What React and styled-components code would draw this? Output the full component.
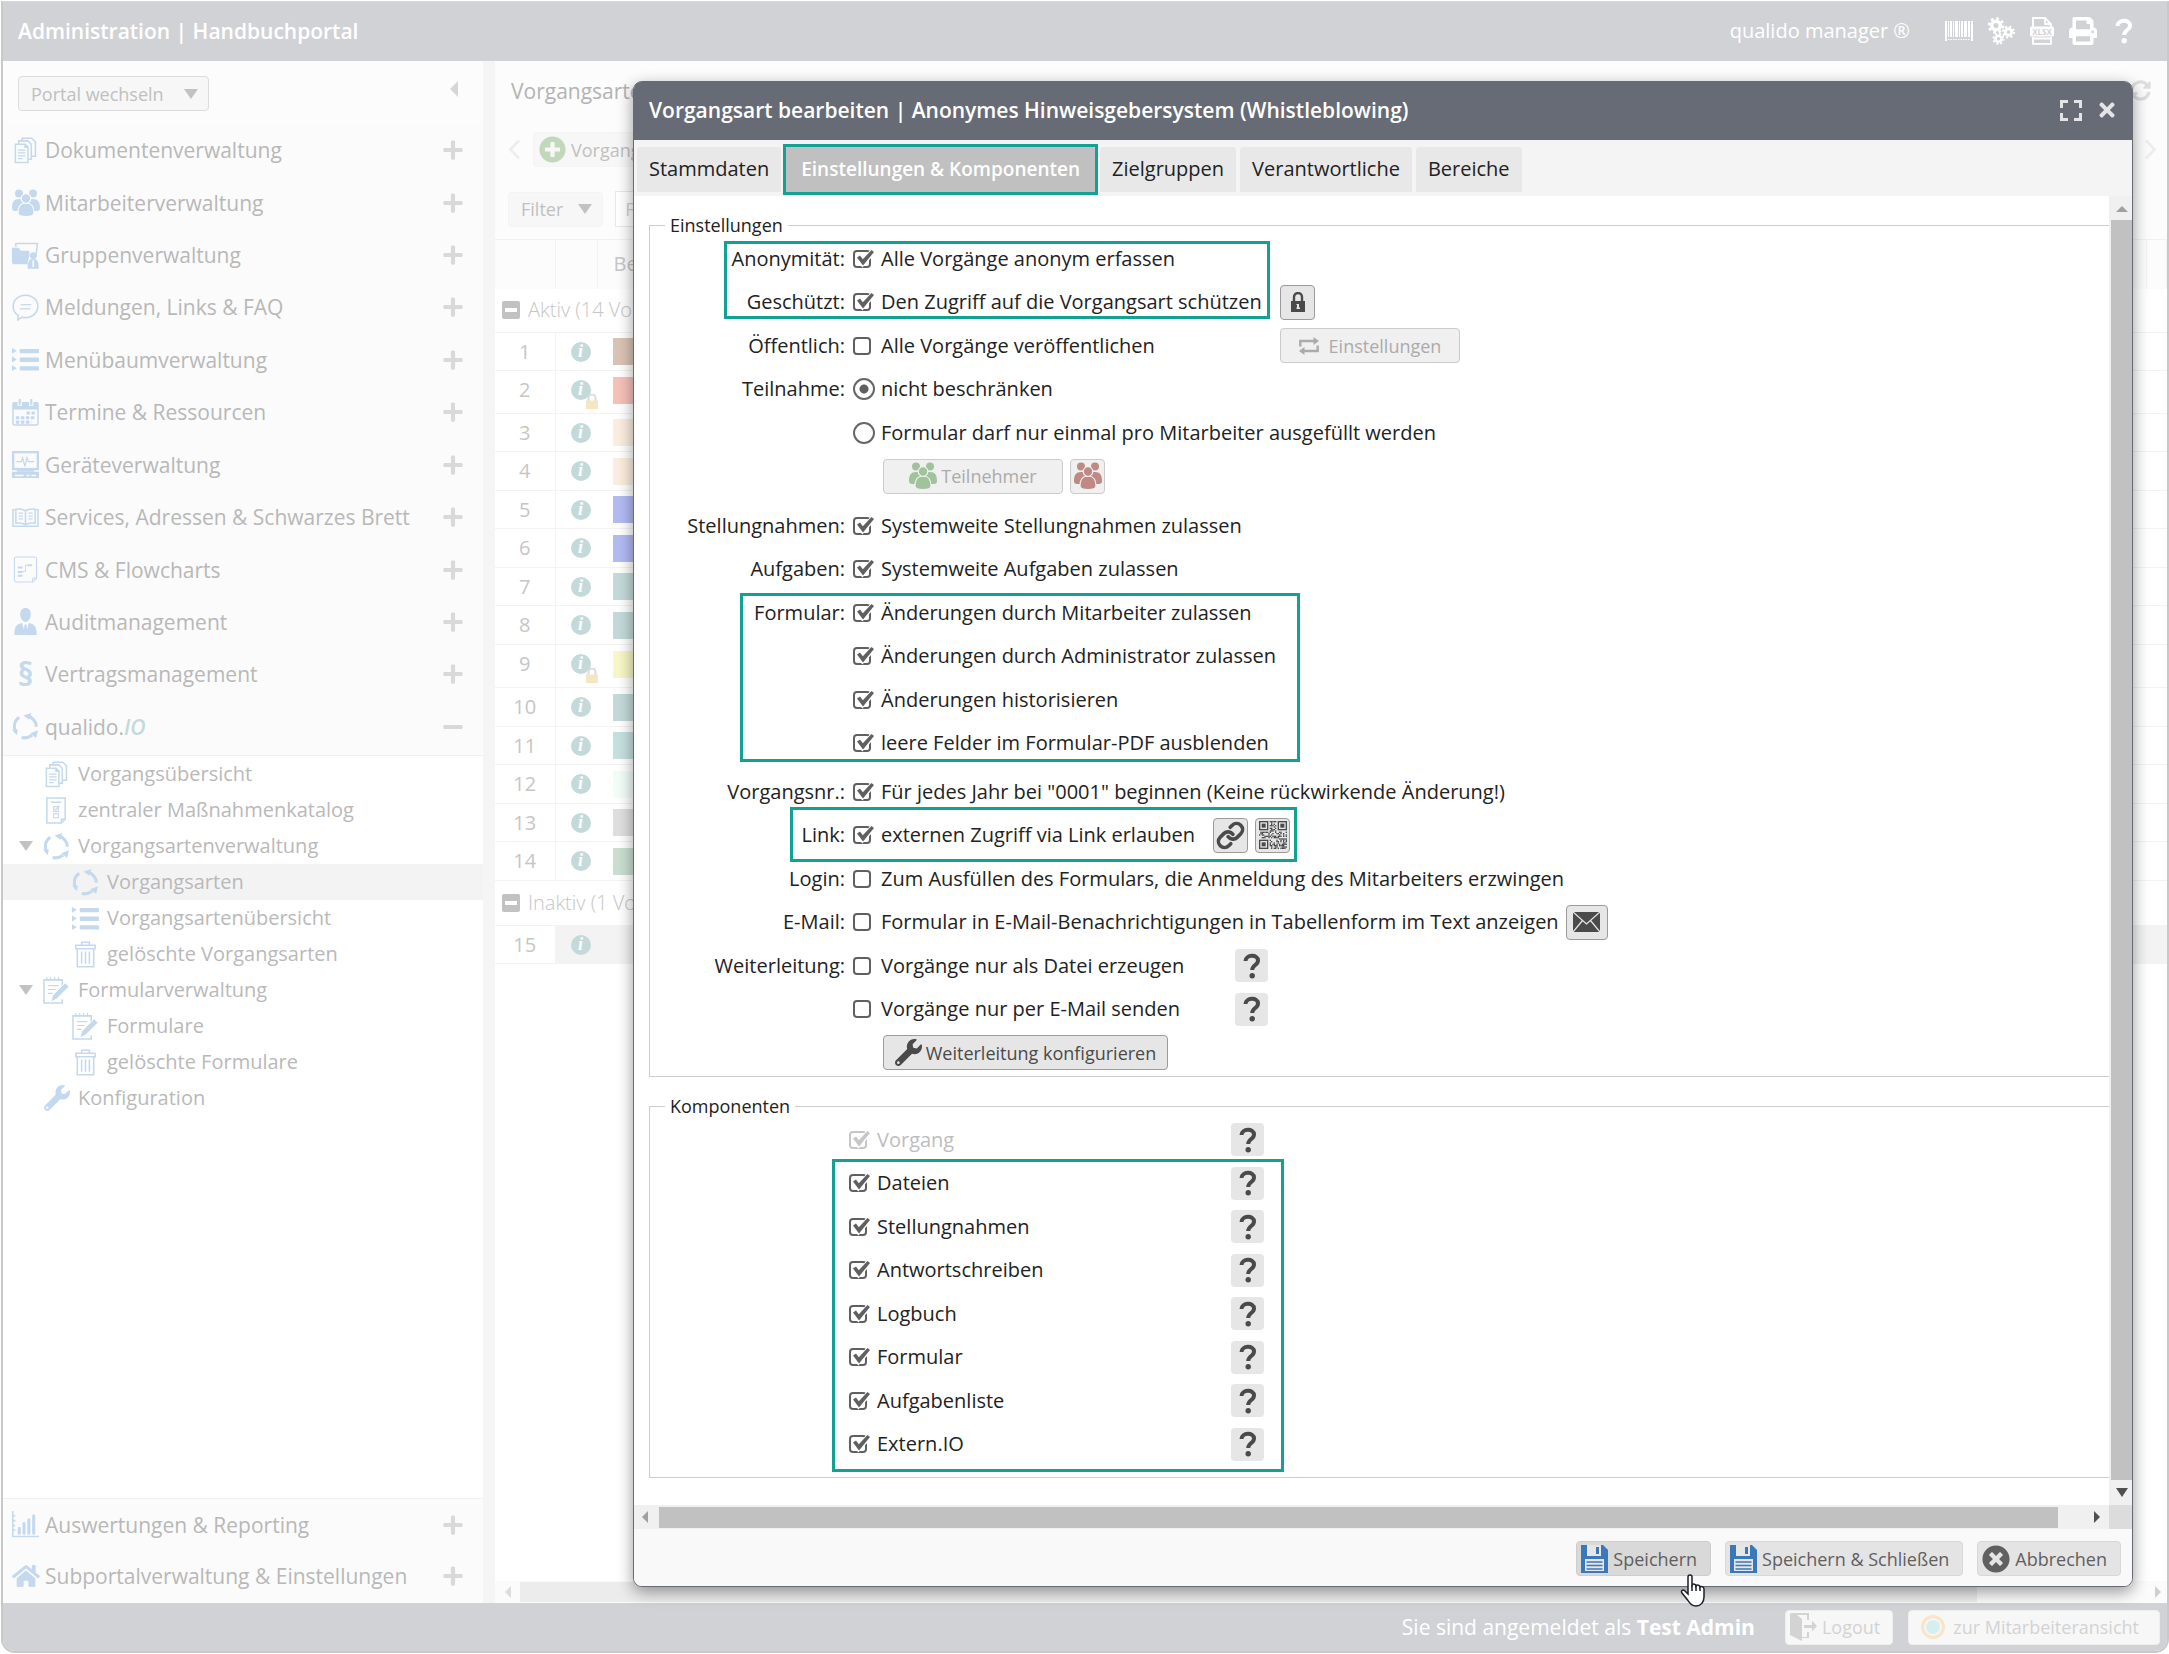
import React, { useState } from 'react'
import styled, { createGlobalStyle, css } from 'styled-components'
import {
  FaHome,
  FaMinus,
  FaPlus,
  FaPlusCircle,
  FaPrint,
  FaSyncAlt,
  FaTimes,
  FaTimesCircle,
  FaWrench
} from 'react-icons/fa'
import { Link as LinkIcon } from 'lucide-react'

const GlobalStyle = createGlobalStyle`
  * {
    box-sizing: border-box;
  }

  body {
    margin: 0;
    background: #fff;
    font-family: 'Open Sans', 'Noto Sans', sans-serif;
    font-size: 20px;
    line-height: 28px;
    color: #222;
  }

  button,
  input {
    font-family: inherit;
  }

  svg {
    flex: none;
    display: block;
  }
`

/* ---------- icons ---------- */

const Svg = ({ size = 27, box = 28, children, ...rest }) => (
  <svg
    width={size}
    height={size}
    viewBox={`0 0 ${box} ${box}`}
    fill="none"
    stroke="currentColor"
    strokeWidth="1.6"
    aria-hidden="true"
    {...rest}
  >
    {children}
  </svg>
)

const DocsIcon = () => (
  <Svg>
    <path d="M3.5 7.5h10l3 3v16h-13z M13.5 7.5v3h3" />
    <path d="M7 7V4h9.5L20 7.5V23h-3 M10.5 4V1.2h10L24.300 5V20h-3.8" />
    <path d="M6 13.5h8M6 16.5h8M6 19.5h8M6 22.5h5" strokeWidth="1.3" />
  </Svg>
)

const GroupIcon = ({ halo = '#fbfbfb' }) => (
  <Svg size={28} fill="currentColor" stroke="none">
    <circle cx="7" cy="4.5" r="4" />
    <circle cx="21" cy="4.5" r="4" />
    <path d="M0 19c0-6 2-9 7-9s6 2 6 6v6H3c-2 0-3-1-3-3zM28 19c0-6-2-9-7-9s-6 2-6 6v6h10c2 0 3-1 3-3z" />
    <g stroke={halo} strokeWidth="1.2">
      <path d="M6 24c0-6 2-10 8-10s8 4 8 10c0 2-2 3.500-8 3.500S6 26 6 24z" />
      <circle cx="14" cy="9.5" r="4.8" />
    </g>
  </Svg>
)

const FolderUserIcon = () => (
  <Svg>
    <path d="M4 5V1.500h22.500l-2 15" />
    <path d="M0 6h7l2 3h9v5l-2 9H1l-1-2z" fill="currentColor" stroke="none" />
    <circle cx="22" cy="14" r="3.5" fill="currentColor" stroke="none" />
    <path d="M17 27c0-6 2-9 5-9s5 3 5 9z" fill="currentColor" />
    <path d="M22 19v7" stroke="#fbfbfb" />
  </Svg>
)

const BubbleIcon = () => (
  <Svg>
    <path d="M14 1.200c7.200 0 12.800 5.100 12.800 11.600S21.200 24.500 14 24.500c-1.500 0-2.800-.2-4-.5L6 27l.5-4.700C3 20.300 1.200 16.800 1.200 12.800 1.200 6.300 6.800 1.200 14 1.200z" />
    <path d="M9 11h11M8 15.500h11" strokeWidth="1.3" />
  </Svg>
)

const ListIcon = () => (
  <Svg fill="currentColor" stroke="none">
    <path d="M0 2l5 3-5 3zM0 11l5 3-5 3zM0 20l5 3-5 3z" />
    <rect x="8" y="3" width="20" height="4.5" rx="1" />
    <rect x="8" y="12" width="20" height="4.5" rx="1" />
    <rect x="8" y="21" width="20" height="4.5" rx="1" />
  </Svg>
)

const CalendarIcon = () => (
  <Svg>
    <rect x="1" y="4" width="26" height="23" rx="1.5" />
    <path d="M1 3.500h26V11H1z" fill="currentColor" stroke="none" />
    <path d="M8 0v7M20 0v7" stroke="#fbfbfb" strokeWidth="4.5" />
    <path d="M8 0v6M20 0v6" strokeWidth="2.2" />
    <path
      d="M15 14.500h9M4 19.500h20M4 24h16"
      strokeWidth="3.2"
      strokeDasharray="3.6 1.6"
    />
  </Svg>
)

const DeviceIcon = () => (
  <Svg>
    <rect x="1.2" y="1.2" width="25.6" height="17.5" strokeWidth="2.4" />
    <path d="M4.500 11h5l1.500-4 2.500 9 2-9 1.500 4h6" strokeWidth="1.3" />
    <path d="M5 19h18v2.500H5z" fill="currentColor" stroke="none" />
    <path d="M0 21.500h28V28H0z" fill="currentColor" stroke="none" />
    <path d="M3 25.500h9M15 25.500h3M20 25.500h5" stroke="#fbfbfb" />
  </Svg>
)

const BookIcon = () => (
  <Svg>
    <path d="M3 6H1v17h26V6h-2" />
    <path d="M14 7C11 5 7 5 4 5.500V20c3-.5 7-.5 10 1.500 3-2 7-2 10-1.500V5.500C21 5 17 5 14 7zM14 7v14.500" />
    <path
      d="M7 9.500h4.500M7 12.500h4.500M7 15.500h4.500M17 9.500h4.500M17 12.500h4.500M17 15.500h4.500"
      strokeWidth="1.2"
    />
  </Svg>
)

const FlowIcon = () => (
  <Svg>
    <path
      d="M4.500 1h19a2 2 0 0 1 2 2v20l-4 4h-17a2 2 0 0 1-2-2V3a2 2 0 0 1 2-2z"
      strokeWidth="1.1"
    />
    <path d="M6 12h5M6 16.500h5M6 20.500h5M16 9.500h5" strokeWidth="2" />
    <path d="M11 16h3V9.500h2M25 23h-3.500v4" strokeWidth="1" />
  </Svg>
)

const AuditorIcon = () => (
  <Svg fill="currentColor" stroke="none">
    <path d="M14 0c3.500 0 5.500 2.500 5.500 6.500S17 14.500 14 14.500 8.500 10.500 8.500 6.500 10.500 0 14 0z" />
    <path d="M2.500 28c0-8 1-10.500 7.500-12.500h8c6.500 2 7.500 4.500 7.500 12.500z" />
    <path d="M10.500 15.500L14 28l3.500-12.500z" fill="#fbfbfb" />
    <path d="M13 17h2l1 7-2 3.500-2-3.500z" />
  </Svg>
)

const CycleIcon = () => (
  <Svg strokeWidth="3.2">
    <path d="M16 2.800c5 1.200 9.200 6 9.200 11.500" />
    <path d="M4 20C1 14 2.500 8 7.500 4.500" />
    <path d="M10 25.500c4 1 8-.5 11-2.500" />
    <path
      d="M12 2.500L20 0l-2 7zM0 17l6 0-1 6zM19 21l8-3-2 8z"
      fill="currentColor"
      stroke="none"
    />
  </Svg>
)

const CatalogIcon = () => (
  <Svg>
    <path d="M4 1h19v22l-4 4H4z" />
    <path d="M8 5.500h11M19 27v-4h4" />
    <path d="M11 10h5v5h-5zM11 17.500h5v4h-5z" strokeWidth="1.1" />
    <path d="M12 12l1.500 1.500L17 9" strokeWidth="1.2" />
  </Svg>
)

const TrashIcon = () => (
  <Svg>
    <path d="M4 4.500h20V8H4zM10 4V1.200h8V4M5.500 8v18.800h17V8" />
    <path d="M10 11v12.500M14 11v12.500M18 11v12.500" />
  </Svg>
)

const NoteIcon = () => (
  <Svg>
    <path d="M20 13V3H1v24h19v-4" />
    <path d="M4 0v4M8 0v4M12 0v4M16 0v4" strokeWidth="1.2" />
    <path d="M5 9h11M5 13h8M5 17h5" strokeWidth="1.2" />
    <path d="M23 6l4 4-13 13-6 3 2-7z" fill="currentColor" stroke="#fff" strokeWidth="1" />
  </Svg>
)

const ChartIcon = () => (
  <Svg>
    <path d="M.8 0v26.500H28M1 5h2.500M1 10h2.500M1 15h2.500M1 20h2.500" />
    <path
      d="M7.500 18v5M12.500 13v10M17.500 9v14M22.500 5v18"
      strokeWidth="3.2"
      strokeLinecap="round"
    />
  </Svg>
)

const BarcodeIcon = () => (
  <svg width="28" height="20" viewBox="0 0 28 20" fill="currentColor" aria-hidden="true">
    <path d="M0 0h2v20H0zM3 0h1v16H3zM5 0h2v16H5zM8 0h1v16H8zM10 0h3v16h-3zM14 0h1v16h-1zM16 0h2v16h-2zM19 0h3v16h-3zM23 0h2v16h-2zM26 0h2v20h-2z" />
    <path d="M3 18.500h22" stroke="currentColor" strokeDasharray="1.5 1" />
  </svg>
)

const GearsIcon = () => (
  <Svg size={28} strokeWidth="3">
    <circle cx="9" cy="8.500" r="4.3" strokeWidth="3.6" />
    <circle cx="9" cy="8.500" r="7" strokeWidth="2.6" strokeDasharray="2.75 2.75" />
    <circle cx="21.500" cy="15" r="3.200" />
    <circle cx="21.500" cy="15" r="5.400" strokeWidth="2.2" strokeDasharray="2.12 2.12" />
    <circle cx="11.500" cy="21.800" r="3" strokeWidth="2.6" />
    <circle cx="11.500" cy="21.800" r="5" strokeWidth="2" strokeDasharray="1.96 1.96" />
  </Svg>
)

const XlsxIcon = () => (
  <svg width="26" height="28" viewBox="0 0 24 28" fill="none" stroke="currentColor" aria-hidden="true">
    <path d="M3 10V1h12l6 6v3M15 1v6h6M3 20v6.800h18V20M3 21.500h18" strokeWidth="1.8" />
    <rect x="0" y="9.5" width="24" height="10" rx="1.5" fill="currentColor" stroke="none" />
    <text x="12" y="17.5" textAnchor="middle" fontSize="8" fontWeight="700" fill="#d1d2d6" stroke="none">
      XLSX
    </text>
  </svg>
)

const QuestionIcon = () => (
  <svg width="26" height="26" viewBox="0 0 26 26" fill="none" stroke="currentColor" aria-hidden="true">
    <path
      d="M6.500 8C6.500 1.500 19 .8 19 7.500c0 4.700-5.800 4.300-5.800 9.500"
      strokeWidth="4"
    />
    <circle cx="13.200" cy="22.700" r="2.7" fill="currentColor" stroke="none" />
  </svg>
)

const ChevronIcon = ({ right }) => (
  <svg width="13" height="21" viewBox="0 0 13 21" fill="none" stroke="currentColor" strokeWidth="3" aria-hidden="true">
    <path d={right ? 'M2 1.500l8.500 9-8.500 9' : 'M11 1.500l-8.500 9 8.500 9'} />
  </svg>
)

const ExpandIcon = () => (
  <svg width="22" height="21" viewBox="0 0 22 21" fill="none" stroke="currentColor" strokeWidth="3" aria-hidden="true">
    <path d="M1.500 8V1.500H8M14 1.500h6.500V8M20.500 13v6.500H14M8 19.500H1.500V13" />
  </svg>
)

const LockIcon = () => (
  <svg width="14" height="20" viewBox="0 0 14 20" aria-hidden="true">
    <path d="M3 10V5a4 4 0 0 1 8 0v5" fill="none" stroke="currentColor" strokeWidth="2.4" />
    <path d="M0 9h14v11H0z" fill="currentColor" />
    <path d="M5.500 12H8v3.500h1V17H5.500v-1.500H6V13h-.5z" fill="#e6e6e6" />
  </svg>
)

const LoopIcon = () => (
  <svg width="20" height="18" viewBox="0 0 20 18" fill="none" stroke="currentColor" strokeWidth="2.4" aria-hidden="true">
    <path d="M1.300 9.500V4H15M18.700 8.500V14H5" />
    <path d="M14.500 0L20 4l-5.500 4zM5.500 10L0 14l5.500 4z" fill="currentColor" stroke="none" />
  </svg>
)

const MailIcon = () => (
  <svg width="27" height="20" viewBox="0 0 27 20" aria-hidden="true">
    <rect width="27" height="20" fill="#4a4a4a" />
    <path
      d="M0 0l13.500 12L27 0M0 20l9.500-11.500M27 20L17.500 8.500"
      fill="none"
      stroke="#e6e6e6"
      strokeWidth="1.3"
    />
  </svg>
)

const SaveIcon = () => (
  <svg width="27" height="28" viewBox="0 0 27 28" aria-hidden="true">
    <path d="M0 0h22l5 5v23H0z" fill="#3b78ba" />
    <path d="M6 0h14v11H6z" fill="#e6e6e6" />
    <path d="M15 2h3v7h-3z" fill="#3b78ba" />
    <path d="M4 14h19v12H4z" fill="#e6e6e6" />
    <path d="M5.500 17h16M5.500 20.500h16M5.500 24h16" stroke="#3b78ba" strokeWidth="1.6" />
  </svg>
)

const DoorIcon = () => (
  <svg width="27" height="28" viewBox="0 0 27 28" aria-hidden="true">
    <path d="M1 0h18v7h-2V2H7l5 4v18h5v-5h2v6h-7v3L0 22V1z" fill="currentColor" />
    <path d="M14 12h8V7.500L27 13l-5 5.500V15h-8z" fill="currentColor" />
  </svg>
)

const HandIcon = () => (
  <svg width="26" height="34" viewBox="0 0 26 34" aria-hidden="true">
    <path
      d="M8 3c0-2.700 4-2.700 4 0v8c1-1.500 4-1 4 1 1-1.500 4-1 4 1 1-1 4-.5 4 2v8c0 5-3 9-8 9-4 0-6-2-8-5.500L2 19c-1.500-2.500 1-4 3-2l3 3z"
      fill="#fff"
      stroke="#1d1d2b"
      strokeWidth="1.5"
    />
    <path d="M12 11v6M16 12v5M20 13v4" stroke="#1d1d2b" strokeWidth="1.5" />
  </svg>
)

const PadlockIcon = () => (
  <svg width="12" height="15" viewBox="0 0 12 15" aria-hidden="true">
    <path d="M2.500 7V4a3.500 3.500 0 0 1 7 0v3" fill="none" stroke="#dcdcdc" strokeWidth="2" />
    <path d="M0 6.500h12V15H0z" fill="#f5e6c4" />
  </svg>
)

// 21 x 21 modules: three finder squares, the rest filled from a fixed sequence
const qrModules = []
let seed = 7
for (let y = 0; y < 21; y += 1) {
  for (let x = 0; x < 21; x += 1) {
    const finder = (x < 8 && y < 8) || (x > 12 && y < 8) || (x < 8 && y > 12)
    seed = (seed * 1103 + 12345) % 65537
    if (!finder && seed % 100 < 52) {
      qrModules.push([x, y])
    }
  }
}

const QrIcon = () => (
  <svg width="28" height="28" viewBox="0 0 21 21" fill="#4a4a4a" aria-hidden="true">
    {[[0, 0], [14, 0], [0, 14]].map(([x, y]) => (
      <g key={`${x}-${y}`}>
        <rect x={x + 0.5} y={y + 0.5} width="6" height="6" fill="none" stroke="#4a4a4a" />
        <rect x={x + 2} y={y + 2} width="3" height="3" />
      </g>
    ))}
    {qrModules.map(([x, y]) => (
      <rect key={`${x}-${y}`} x={x} y={y} width="1" height="1" />
    ))}
  </svg>
)

const Triangle = styled.span`
  flex: none;
  width: 0;
  height: 0;
  border: ${({ $size }) => $size || 7}px solid transparent;
  ${({ $dir, $size = 7, $color = '#c2c2c2' }) =>
    ({
      down: css`
        border-top: ${$size + 3}px solid ${$color};
        border-bottom: 0;
      `,
      up: css`
        border-bottom: ${$size}px solid ${$color};
        border-top: 0;
      `,
      left: css`
        border-right: ${$size}px solid ${$color};
        border-left: 0;
      `,
      right: css`
        border-left: ${$size}px solid ${$color};
        border-right: 0;
      `
    }[$dir])}
`

/* ---------- page frame ---------- */

const Page = styled.div`
  position: relative;
  height: 100vh;
  padding: 1px 0 1px 1px;
  overflow: hidden;
`

const Frame = styled.div`
  height: 100%;
  display: flex;
  flex-direction: column;
  border: 2px solid #c8c8c9;
  border-top: 1px solid #d6dad6;
  border-radius: 0 0 14px 14px;
  overflow: hidden;
`

const TopBar = styled.header`
  flex: none;
  height: 59px;
  padding: 0 30px 2px 15px;
  display: flex;
  align-items: center;
  justify-content: space-between;
  background: #d1d2d6;
  color: #fff;
`

const PortalTitle = styled.h1`
  margin: 0;
  font-size: 21px;
  font-weight: 600;
`

const TopTools = styled.div`
  display: flex;
  align-items: center;
  gap: 14px;
`

const Product = styled.span`
  margin-right: 21px;
`

const BareButton = styled.button`
  height: ${({ $height }) => ($height ? `${$height}px` : 'auto')};
  display: flex;
  align-items: center;
  justify-content: center;
  padding: 0;
  border: 0;
  background: none;
  color: inherit;
  cursor: pointer;
`

const Workspace = styled.div`
  flex: 1;
  min-height: 0;
  display: flex;
`

const StatusBar = styled.footer`
  flex: none;
  height: 48px;
  padding: 0 7px;
  display: flex;
  align-items: center;
  justify-content: flex-end;
  gap: 15px;
  background: #d1d2d6;
  color: #fff;
  font-size: 21px;
`

const LoginState = styled.span`
  margin-right: 15px;
`

const StatusButton = styled.button`
  height: 35px;
  padding: 0 ${({ $wide }) => ($wide ? 20 : 12)}px 0 ${({ $wide }) => ($wide ? 12 : 4)}px;
  display: flex;
  align-items: center;
  gap: ${({ $wide }) => ($wide ? 8 : 5)}px;
  border: 1px solid #eee;
  border-radius: 4px;
  background: #f7f7f7;
  color: #d3d3d3;
  font-size: 18px;
`

const Ring = styled.span`
  width: 24px;
  height: 24px;
  border: 3px solid #fbe5c8;
  border-radius: 50%;
  background: #d5eeee;
  box-shadow: inset 0 0 0 2px #f7f7f7;
`

/* ---------- sidebar ---------- */

const Sidebar = styled.nav`
  flex: none;
  width: 480px;
  display: flex;
  flex-direction: column;
  background: #fff;
`

const Splitter = styled.div`
  flex: none;
  width: 12px;
  background: #f5f5f5;
`

const PortalRow = styled.div`
  flex: none;
  height: 63px;
  padding: 15px 25px 0 15px;
  display: flex;
  align-items: flex-start;
  justify-content: space-between;
  background: #fcfcfc;
`

const SoftButton = styled.button`
  height: 35px;
  padding: 0 10px 0 ${({ $icon }) => ($icon ? 5 : 12)}px;
  display: flex;
  align-items: center;
  gap: ${({ $icon, $outlined }) => ($icon ? 5 : $outlined ? 20 : 15)}px;
  border: 1px solid ${({ $outlined }) => ($outlined ? '#dcdcdc' : '#f4f4f4')};
  border-radius: 4px;
  background: #f7f7f7;
  color: #c0c0c0;
  font-size: 18px;
  white-space: nowrap;
`

const MenuGroup = styled.div`
  flex: none;
  height: ${({ $height }) => $height}px;
  padding-bottom: 2px;
  display: grid;
  grid-auto-rows: 1fr;
  background: #fbfbfb;
  border-${({ $edge }) => $edge}: 1px solid #f1f1f1;
`

const MenuItem = styled.a`
  display: flex;
  align-items: center;
  gap: 6px;
  padding: 0 19px 0 9px;
  color: #b8b8b8;
  font-size: 21px;
  text-decoration: none;
  white-space: nowrap;

  em {
    font-weight: 600;
    color: #c4dada;
  }
`

const IconSlot = styled.span`
  flex: none;
  width: 27px;
  display: flex;
  justify-content: center;
  color: #c5d9ee;
  font-size: 32px;
  font-weight: 700;
`

const MenuLabel = styled.span`
  flex: 1;
`

const Toggle = styled.span`
  color: #d9d9d9;
  font-size: 22px;
`

const Tree = styled.div`
  flex: 1;
`

const TreeItem = styled.a`
  height: 36px;
  padding-left: ${({ $level }) => ($level > 1 ? 45 : 16)}px;
  display: flex;
  align-items: center;
  background: ${({ $active }) => ($active ? '#f3f3f3' : 'transparent')};
  color: #b9b9b9;
  text-decoration: none;
  white-space: nowrap;
`

const Caret = styled.span`
  width: 24px;
  display: flex;
`

const TreeLabel = styled.span`
  margin-left: 8px;
`

/* ---------- process list ---------- */

const Main = styled.main`
  flex: 1;
  min-width: 0;
  display: flex;
  flex-direction: column;
  background: #fff;
`

const Bar = styled.div`
  flex: none;
  height: ${({ $height }) => $height}px;
  padding: 0 ${({ $end }) => $end || 10}px 0 13px;
  display: flex;
  align-items: center;
  gap: 12px;
  background: #fcfcfc;
  color: #eee;
`

const ListTitle = styled.h2`
  flex: 1;
  margin: 0 0 0 3px;
  font-size: 21px;
  font-weight: 400;
  color: #b3b3b3;
`

const Fill = styled.span`
  flex: 1;
`

const SearchInput = styled.input`
  width: 240px;
  height: 36px;
  padding: 0 9px;
  border: 1px solid #e8e8e8;
  background: #fff;
  font-size: 18px;

  &::placeholder {
    color: #cfcfcf;
  }
`

const List = styled.table`
  width: 100%;
  border-collapse: collapse;
  table-layout: fixed;
  color: #c6c6c6;

  th,
  td {
    padding: 0;
    border-bottom: 1px solid #f3f3f3;
  }

  thead th {
    height: 49px;
    border-top: 1px solid #f1f1f1;
    border-right: 1px solid #f3f3f3;
    border-bottom: 0;
    background: #fcfcfc;
    font-weight: 400;
    text-align: left;
  }

  thead th:nth-child(3) {
    padding-left: 16px;
  }

  tbody td:first-child {
    text-align: center;
    border-right: 1px solid #f3f3f3;
  }
`

const ListRow = styled.tr`
  height: ${({ $height }) => $height}px;

  td {
    padding-bottom: ${({ $locked }) => ($locked ? 4 : 0)}px;
  }

  td + td {
    background: ${({ $shaded }) => ($shaded ? '#f3f3f3' : 'transparent')};
  }
`

const SectionCell = styled.th`
  height: ${({ $tall }) => ($tall ? 44 : 45)}px;
  font-weight: 300;
  text-align: left;
`

const SectionTitle = styled.span`
  display: flex;
  align-items: center;
  gap: 8px;
  padding-left: 7px;
`

const Collapse = styled.span`
  width: 18px;
  height: 18px;
  display: flex;
  align-items: center;
  justify-content: center;
  border-radius: 2px;
  background: #c2c2c2;

  &::after {
    content: '';
    width: 12px;
    height: 4px;
    background: #fff;
  }
`

const InfoCell = styled.span`
  position: relative;
  width: 20px;
  display: flex;
  margin-left: 15px;
`

const Info = styled.span`
  width: 20px;
  height: 20px;
  border-radius: 50%;
  background: #c4dada;
  color: #fff;
  font: italic 700 18px/19px 'Liberation Serif', serif;
  text-align: center;
`

const LockBadge = styled.span`
  position: absolute;
  left: 15px;
  top: 14px;
`

const Swatch = styled.span`
  display: block;
  width: 60px;
  height: 27px;
  margin-left: 16px;
  background: ${({ $color }) => $color};
`

const ListScroll = styled.div`
  flex: none;
  height: 22px;
  display: flex;
  align-items: center;
  padding: 0 6px 0 10px;
  gap: 9px;
  background: #fbfbfb;
`

const ListThumb = styled.span`
  flex: none;
  width: 88%;
  height: 20px;
  background: #ececec;
`

/* ---------- dialog ---------- */

const DialogLayer = styled.div`
  position: absolute;
  inset: 0;
  padding: 81px 36px 67px 633px;
  display: flex;
`

const Dialog = styled.section`
  position: relative;
  flex: 1;
  min-width: 0;
  display: flex;
  flex-direction: column;
  border: 1px solid #666b75;
  border-radius: 9px;
  background: #fff;
  box-shadow: 0 5px 16px rgba(0, 0, 0, 0.4);
`

const DialogHeader = styled.header`
  flex: none;
  height: 58px;
  padding: 0 14px 2px 15px;
  display: flex;
  align-items: center;
  gap: 14px;
  border-radius: 7px 7px 0 0;
  background: #666b75;
  color: #e4e4e6;
`

const DialogTitle = styled.h2`
  flex: 1;
  margin: 0;
  color: #fff;
  font-size: 21px;
  font-weight: 600;
`

const Tabs = styled.div`
  flex: none;
  height: 56px;
  padding: 7px 3px 4px;
  display: flex;
  gap: 4px;
  background: #f4f4f4;
`

const Tab = styled.button`
  position: relative;
  padding: 0 12px 2px;
  border: 0;
  border-radius: 3px 3px 0 0;
  background: #e8e8e8;
  color: #222;
  font-size: 20px;

  ${({ $active }) =>
    $active &&
    css`
      padding: 0 16px 2px;
      background: #c0c0c0;
      color: #fff;
      font-size: 19px;
      font-weight: 600;

      &::after {
        content: '';
        position: absolute;
        inset: -3px -2px;
        border: 3px solid #13a193;
      }
    `}
`

const ScrollArea = styled.div`
  flex: 1;
  min-height: 0;
  display: flex;
`

const Content = styled.form`
  flex: 1;
  min-width: 0;
  padding: 17px 0 0 15px;
  overflow: hidden;
`

const VerticalBar = styled.div`
  flex: none;
  width: 23px;
  padding: 10px 0 8px 2px;
  display: flex;
  flex-direction: column;
  align-items: center;
  gap: 8px;
  background: #f0f0f0;
`

const VerticalThumb = styled.span`
  flex: 1;
  align-self: stretch;
  background: #c1c1c1;
`

const HorizontalBar = styled.div`
  flex: none;
  height: 24px;
  display: flex;
  align-items: center;
  padding-left: 8px;
  background: #f0f0f0;
`

const HorizontalThumb = styled.span`
  flex: 1;
  height: 21px;
  margin: 0 36px 0 11px;
  background: #c1c1c1;
`

const Corner = styled.span`
  width: 23px;
  height: 24px;
  margin-left: 9px;
  background: #dcdcdc;
`

const Fieldset = styled.fieldset`
  min-width: 0;
  margin: 0 0 17px;
  padding: 0 0 ${({ $bottom }) => $bottom}px;
  border: 1px solid #cdcdcd;
  border-right: 0;
`

const Legend = styled.legend`
  margin-left: 15px;
  padding: 0 5px;
  font-size: 18px;
  line-height: 24px;
`

// Rows are 43.5px on average, so the tracks alternate
const Rows = styled.div`
  position: relative;
  display: grid;
  grid-auto-rows: 44px 43px;
  margin-bottom: ${({ $space }) => $space || 0}px;
`

const Marker = styled.span`
  position: absolute;
  left: ${({ $left }) => $left}px;
  top: ${({ $top }) => $top}px;
  width: ${({ $width }) => $width}px;
  height: ${({ $height }) => $height}px;
  border: 3px solid #13a193;
  pointer-events: none;
`

const Row = styled.div`
  display: flex;
  align-items: center;
  padding-bottom: 1px;
  white-space: nowrap;
`

const RowLabel = styled.span`
  flex: none;
  width: ${({ $narrow }) => ($narrow ? 191 : 195)}px;
  margin-right: 8px;
  text-align: right;
`

const ChoiceLabel = styled.label`
  flex: none;
  min-width: ${({ $width }) => $width || 0}px;
  display: flex;
  align-items: center;
  gap: 6px;
  color: ${({ $disabled }) => ($disabled ? '#bdbdbd' : 'inherit')};
`

const CheckSlot = styled.span`
  width: 22px;
  height: 22px;
  display: grid;
  align-items: center;
  color: ${({ $disabled }) => ($disabled ? '#c6c6c6' : '#606060')};

  input,
  svg {
    grid-area: 1 / 1;
    pointer-events: none;
  }
`

const CheckInput = styled.input`
  appearance: none;
  width: 18px;
  height: 18px;
  margin: 0;
  border: 2px solid currentColor;
  border-radius: 4px;
  background: #fff;
  color: inherit;
`

const RadioInput = styled.input`
  appearance: none;
  width: 22px;
  height: 22px;
  margin: 0;
  border: 2px solid #666;
  border-radius: 50%;
  background: #fff;

  &:checked {
    background: radial-gradient(circle, #606060 4px, #fff 5px);
  }
`

const RowTools = styled.span`
  display: flex;
  gap: 7px;
  margin-left: ${({ $left }) => $left || 0}px;
`

const ToolButton = styled.button`
  width: ${({ $width }) => $width || 35}px;
  height: 35px;
  padding: 0;
  display: flex;
  align-items: center;
  justify-content: center;
  gap: ${({ $gap }) => $gap || 4}px;
  border: 1px solid ${({ disabled }) => (disabled ? '#cbcbcb' : '#9b9b9b')};
  border-radius: 4px;
  background: ${({ disabled }) => (disabled ? '#f0f0f0' : '#e6e6e6')};
  color: ${({ disabled }) => (disabled ? '#ababab' : '#4a4a4a')};
  font-size: 18px;
  white-space: nowrap;
`

const HelpButton = styled.button`
  width: 33px;
  height: 33px;
  padding: 0;
  display: flex;
  align-items: center;
  justify-content: center;
  border: 0;
  border-radius: 4px;
  background: #e6e6e6;
  color: #4a4a4a;
`

const Tint = styled.span`
  color: ${({ $color }) => $color};
`

const DialogFooter = styled.footer`
  flex: none;
  height: 57px;
  padding: 2px 11px 0;
  display: flex;
  align-items: center;
  justify-content: flex-end;
  gap: 14px;
  border-radius: 0 0 8px 8px;
  background: #f9f9f9;
`

const ActionButton = styled.button`
  height: 35px;
  padding: 0 13px 0 4px;
  display: flex;
  align-items: center;
  gap: 5px;
  border: 1px solid ${({ $hover }) => ($hover ? '#cdcdcd' : '#d8d8d8')};
  border-radius: 4px;
  background: ${({ $hover }) => ($hover ? '#d9d9d9' : '#e4e4e4')};
  color: #606060;
  font-size: 18px;
`

const Pointer = styled.span`
  position: absolute;
  right: 426px;
  bottom: -22px;
  z-index: 1;
`

/* ---------- data ---------- */

const menu = [
  ['Dokumentenverwaltung', <DocsIcon />],
  ['Mitarbeiterverwaltung', <GroupIcon />],
  ['Gruppenverwaltung', <FolderUserIcon />],
  ['Meldungen, Links & FAQ', <BubbleIcon />],
  ['Menübaumverwaltung', <ListIcon />],
  ['Termine & Ressourcen', <CalendarIcon />],
  ['Geräteverwaltung', <DeviceIcon />],
  ['Services, Adressen & Schwarzes Brett', <BookIcon />],
  ['CMS & Flowcharts', <FlowIcon />],
  ['Auditmanagement', <AuditorIcon />],
  ['Vertragsmanagement', '§']
]

const menuBottom = [
  ['Auswertungen & Reporting', <ChartIcon />],
  ['Subportalverwaltung & Einstellungen', <FaHome size={28} />]
]

const tree = [
  { label: 'Vorgangsübersicht', icon: <DocsIcon /> },
  { label: 'zentraler Maßnahmenkatalog', icon: <CatalogIcon /> },
  { label: 'Vorgangsartenverwaltung', icon: <CycleIcon />, open: true },
  { label: 'Vorgangsarten', icon: <CycleIcon />, level: 2, active: true },
  { label: 'Vorgangsartenübersicht', icon: <ListIcon />, level: 2 },
  { label: 'gelöschte Vorgangsarten', icon: <TrashIcon />, level: 2 },
  { label: 'Formularverwaltung', icon: <NoteIcon />, open: true },
  { label: 'Formulare', icon: <NoteIcon />, level: 2 },
  { label: 'gelöschte Formulare', icon: <TrashIcon />, level: 2 },
  { label: 'Konfiguration', icon: <FaWrench size={26} /> }
]

const processes = [
  { color: '#dac3b5' },
  { color: '#f6c1b9', locked: true },
  { color: '#fbeee0' },
  { color: '#fbeee0' },
  { color: '#b3bbf3' },
  { color: '#b3bbf3' },
  { color: '#c4dada' },
  { color: '#c4dada' },
  { color: '#f8f7c8', locked: true },
  { color: '#c4dada' },
  { color: '#c6e0e0' },
  { color: '#f2fdf8' },
  { color: '#dfdfdf' },
  { color: '#cadfd1' }
]

const components = [
  'Dateien',
  'Stellungnahmen',
  'Antwortschreiben',
  'Logbuch',
  'Formular',
  'Aufgabenliste',
  'Extern.IO'
]

const tabs = [
  'Stammdaten',
  'Einstellungen & Komponenten',
  'Zielgruppen',
  'Verantwortliche',
  'Bereiche'
]

/* ---------- parts ---------- */

const Choice = ({ label, on = false, disabled, width }) => {
  const [checked, setChecked] = useState(on)

  return (
    <ChoiceLabel $width={width} $disabled={disabled}>
      <CheckSlot $disabled={disabled}>
        <CheckInput
          type="checkbox"
          checked={checked}
          disabled={disabled}
          onChange={() => setChecked(!checked)}
        />
        {checked && (
          <svg width="22" height="22" viewBox="0 0 22 22" fill="none" aria-hidden="true">
            <path d="M5 9.500l4.500 5.500L20 3.500" stroke="#fff" strokeWidth="6" />
            <path d="M4 9.500L7 7.500l2.800 3.800L18.500 2l2.500 2L10 17.500z" fill="currentColor" />
          </svg>
        )}
      </CheckSlot>
      {label}
    </ChoiceLabel>
  )
}

const Setting = ({ title, children, narrow }) => (
  <Row>
    <RowLabel $narrow={narrow}>{title}</RowLabel>
    {children}
  </Row>
)

const Help = () => (
  <HelpButton type="button" aria-label="Hilfe">
    <QuestionIcon />
  </HelpButton>
)

const MenuEntry = ({ icon, children, expanded }) => (
  <MenuItem href="#">
    <IconSlot>{icon}</IconSlot>
    <MenuLabel>{children}</MenuLabel>
    <Toggle>{expanded ? <FaMinus /> : <FaPlus />}</Toggle>
  </MenuItem>
)

const ProcessRow = ({ number, color, locked, height, shaded }) => (
  <ListRow $height={height} $shaded={shaded} $locked={locked}>
    <td>{number}</td>
    <td>
      <InfoCell>
        <Info>i</Info>
        {locked && (
          <LockBadge>
            <PadlockIcon />
          </LockBadge>
        )}
      </InfoCell>
    </td>
    <td colSpan={2}>{color && <Swatch $color={color} />}</td>
  </ListRow>
)

const SideMenu = () => (
  <Sidebar>
    <PortalRow>
      <SoftButton $outlined>
        Portal wechseln
        <Triangle $dir="down" />
      </SoftButton>
      <BareButton $height={26} aria-label="Menü einklappen">
        <Triangle $dir="left" $size={8} $color="#d6d6d6" />
      </BareButton>
    </PortalRow>
    <MenuGroup $height={632} $edge="bottom">
      {menu.map(([label, icon]) => (
        <MenuEntry key={label} icon={icon}>
          {label}
        </MenuEntry>
      ))}
      <MenuEntry icon={<CycleIcon />} expanded>
        qualido.<em>IO</em>
      </MenuEntry>
    </MenuGroup>
    <Tree>
      {tree.map(({ label, icon, level = 1, open, active }) => (
        <TreeItem href="#" key={label} $level={level} $active={active}>
          <Caret>{open && <Triangle $dir="down" />}</Caret>
          <IconSlot>{icon}</IconSlot>
          <TreeLabel>{label}</TreeLabel>
        </TreeItem>
      ))}
    </Tree>
    <MenuGroup $height={105} $edge="top">
      {menuBottom.map(([label, icon]) => (
        <MenuEntry key={label} icon={icon}>
          {label}
        </MenuEntry>
      ))}
    </MenuGroup>
  </Sidebar>
)

const ProcessList = () => (
  <Main>
    <Bar $height={59} $end={16}>
      <ListTitle>Vorgangsarten</ListTitle>
      <FaSyncAlt size={21} color="#dedede" />
    </Bar>
    <Bar $height={59}>
      <ChevronIcon />
      <SoftButton $icon>
        <FaPlusCircle size={27} color="#c1d8bb" />
        Vorgangsart
      </SoftButton>
      <Fill />
      <ChevronIcon right />
    </Bar>
    <Bar $height={60}>
      <SoftButton>
        Filter
        <Triangle $dir="down" />
      </SoftButton>
      <SearchInput placeholder="Filter" aria-label="Filter" />
    </Bar>
    <List>
      <colgroup>
        <col width="60" />
        <col width="42" />
        <col />
        <col width="20" />
      </colgroup>
      <thead>
        <tr>
          <th />
          <th />
          <th>Bezeichnung</th>
          <th />
        </tr>
      </thead>
      <tbody>
        <tr>
          <SectionCell colSpan={4} $tall>
            <SectionTitle>
              <Collapse />
              Aktiv (14 Vorgangsarten)
            </SectionTitle>
          </SectionCell>
        </tr>
        {processes.map(({ color, locked }, i) => (
          <ProcessRow
            key={i}
            number={i + 1}
            color={color}
            locked={locked}
            height={locked ? 43 : i % 2 ? 39 : 38}
          />
        ))}
        <tr>
          <SectionCell colSpan={4}>
            <SectionTitle>
              <Collapse />
              Inaktiv (1 Vorgangsart)
            </SectionTitle>
          </SectionCell>
        </tr>
        <ProcessRow number={15} height={38} shaded />
      </tbody>
    </List>
    <Fill />
    <ListScroll>
      <Triangle $dir="left" $size={6} $color="#dcdcdc" />
      <ListThumb />
      <Fill />
      <Triangle $dir="right" $size={6} $color="#cfcfcf" />
    </ListScroll>
  </Main>
)

const SettingsFields = () => (
  <Fieldset $bottom={1}>
    <Legend>Einstellungen</Legend>
    <Rows>
      <Setting title="Anonymität:">
        <Choice label="Alle Vorgänge anonym erfassen" on />
      </Setting>
      <Setting title="Geschützt:">
        <Choice label="Den Zugriff auf die Vorgangsart schützen" on width={427} />
        <ToolButton type="button" aria-label="Zugriffsschutz">
          <LockIcon />
        </ToolButton>
      </Setting>
      <Marker $left={74} $top={4} $width={546} $height={78} />
    </Rows>
    <Rows $space={6}>
      <Setting title="Öffentlich:">
        <Choice label="Alle Vorgänge veröffentlichen" width={427} />
        <ToolButton type="button" disabled $width={180} $gap={10}>
          <LoopIcon />
          Einstellungen
        </ToolButton>
      </Setting>
      <Setting title="Teilnahme:">
        <ChoiceLabel>
          <RadioInput type="radio" name="teilnahme" defaultChecked />
          nicht beschränken
        </ChoiceLabel>
      </Setting>
      <Setting>
        <ChoiceLabel>
          <RadioInput type="radio" name="teilnahme" />
          Formular darf nur einmal pro Mitarbeiter ausgefüllt werden
        </ChoiceLabel>
      </Setting>
      <Setting>
        <RowTools $left={30}>
          <ToolButton type="button" disabled $width={180}>
            <Tint $color="#a0c39b">
              <GroupIcon halo="#f0f0f0" />
            </Tint>
            Teilnehmer
          </ToolButton>
          <ToolButton type="button" disabled aria-label="Teilnehmer entfernen">
            <Tint $color="#bf8a84">
              <GroupIcon halo="#f0f0f0" />
            </Tint>
          </ToolButton>
        </RowTools>
      </Setting>
    </Rows>
    <Rows>
      <Setting title="Stellungnahmen:">
        <Choice label="Systemweite Stellungnahmen zulassen" on />
      </Setting>
      <Setting title="Aufgaben:">
        <Choice label="Systemweite Aufgaben zulassen" on />
      </Setting>
    </Rows>
    <Rows $space={5}>
      <Setting title="Formular:">
        <Choice label="Änderungen durch Mitarbeiter zulassen" on />
      </Setting>
      <Setting>
        <Choice label="Änderungen durch Administrator zulassen" on />
      </Setting>
      <Setting>
        <Choice label="Änderungen historisieren" on />
      </Setting>
      <Setting>
        <Choice label="leere Felder im Formular-PDF ausblenden" on />
      </Setting>
      <Marker $left={90} $top={2} $width={560} $height={169} />
    </Rows>
    <Rows>
      <Setting title="Vorgangsnr.:">
        <Choice label={'Für jedes Jahr bei "0001" beginnen (Keine rückwirkende Änderung!)'} on />
      </Setting>
      <Setting title="Link:">
        <Choice label="externen Zugriff via Link erlauben" on width={360} />
        <RowTools>
          <ToolButton type="button" aria-label="Link anzeigen">
            <LinkIcon size={29} strokeWidth={3} />
          </ToolButton>
          <ToolButton type="button" aria-label="QR-Code anzeigen">
            <QrIcon />
          </ToolButton>
        </RowTools>
      </Setting>
      <Marker $left={140} $top={37} $width={507} $height={55} />
    </Rows>
    <Rows>
      <Setting title="Login:">
        <Choice label="Zum Ausfüllen des Formulars, die Anmeldung des Mitarbeiters erzwingen" />
      </Setting>
      <Setting title="E-Mail:">
        <Choice label="Formular in E-Mail-Benachrichtigungen in Tabellenform im Text anzeigen" />
        <RowTools $left={7}>
          <ToolButton type="button" $width={42} aria-label="E-Mail bearbeiten">
            <MailIcon />
          </ToolButton>
        </RowTools>
      </Setting>
      <Setting title="Weiterleitung:">
        <Choice label="Vorgänge nur als Datei erzeugen" width={382} />
        <Help />
      </Setting>
      <Setting>
        <Choice label="Vorgänge nur per E-Mail senden" width={382} />
        <Help />
      </Setting>
      <Setting>
        <RowTools $left={30}>
          <ToolButton type="button" $width={285}>
            <FaWrench size={27} />
            Weiterleitung konfigurieren
          </ToolButton>
        </RowTools>
      </Setting>
    </Rows>
  </Fieldset>
)

const ComponentFields = () => (
  <Fieldset $bottom={11}>
    <Legend>Komponenten</Legend>
    <Rows>
      <Setting narrow>
        <Choice label="Vorgang" on disabled width={382} />
        <Help />
      </Setting>
      {components.map(name => (
        <Setting narrow key={name}>
          <Choice label={name} on width={382} />
          <Help />
        </Setting>
      ))}
      <Marker $left={182} $top={41} $width={452} $height={313} />
    </Rows>
  </Fieldset>
)

const EditDialog = () => {
  const [tab, setTab] = useState(1)

  return (
    <DialogLayer>
      <Dialog role="dialog" aria-labelledby="dialog-title">
        <DialogHeader>
          <DialogTitle id="dialog-title">
            Vorgangsart bearbeiten | Anonymes Hinweisgebersystem (Whistleblowing)
          </DialogTitle>
          <BareButton aria-label="Maximieren">
            <ExpandIcon />
          </BareButton>
          <BareButton aria-label="Schließen">
            <FaTimes size={22} />
          </BareButton>
        </DialogHeader>
        <Tabs role="tablist">
          {tabs.map((name, i) => (
            <Tab
              key={name}
              role="tab"
              aria-selected={i === tab}
              $active={i === tab}
              onClick={() => setTab(i)}
            >
              {name}
            </Tab>
          ))}
        </Tabs>
        <ScrollArea>
          <Content>
            <SettingsFields />
            <ComponentFields />
          </Content>
          <VerticalBar>
            <Triangle $dir="up" $size={6} $color="#a0a0a0" />
            <VerticalThumb />
            <Triangle $dir="down" $size={6} $color="#505050" />
          </VerticalBar>
        </ScrollArea>
        <HorizontalBar>
          <Triangle $dir="left" $size={6} $color="#a0a0a0" />
          <HorizontalThumb />
          <Triangle $dir="right" $size={6} $color="#505050" />
          <Corner />
        </HorizontalBar>
        <DialogFooter>
          <ActionButton $hover>
            <SaveIcon />
            Speichern
          </ActionButton>
          <ActionButton>
            <SaveIcon />
            Speichern &amp; Schließen
          </ActionButton>
          <ActionButton>
            <FaTimesCircle size={28} />
            Abbrechen
          </ActionButton>
        </DialogFooter>
        <Pointer>
          <HandIcon />
        </Pointer>
      </Dialog>
    </DialogLayer>
  )
}

const App = () => (
  <Page>
    <GlobalStyle />
    <Frame>
      <TopBar>
        <PortalTitle>Administration | Handbuchportal</PortalTitle>
        <TopTools>
          <Product>qualido manager ®</Product>
          <BareButton aria-label="Barcode">
            <BarcodeIcon />
          </BareButton>
          <BareButton aria-label="Einstellungen">
            <GearsIcon />
          </BareButton>
          <BareButton aria-label="Excel-Export">
            <XlsxIcon />
          </BareButton>
          <BareButton aria-label="Drucken">
            <FaPrint size={28} />
          </BareButton>
          <BareButton aria-label="Hilfe">
            <QuestionIcon />
          </BareButton>
        </TopTools>
      </TopBar>
      <Workspace>
        <SideMenu />
        <Splitter />
        <ProcessList />
      </Workspace>
      <StatusBar>
        <LoginState>
          Sie sind angemeldet als <strong>Test Admin</strong>
        </LoginState>
        <StatusButton>
          <DoorIcon />
          Logout
        </StatusButton>
        <StatusButton $wide>
          <Ring />
          zur Mitarbeiteransicht
        </StatusButton>
      </StatusBar>
    </Frame>
    <EditDialog />
  </Page>
)

export default App
